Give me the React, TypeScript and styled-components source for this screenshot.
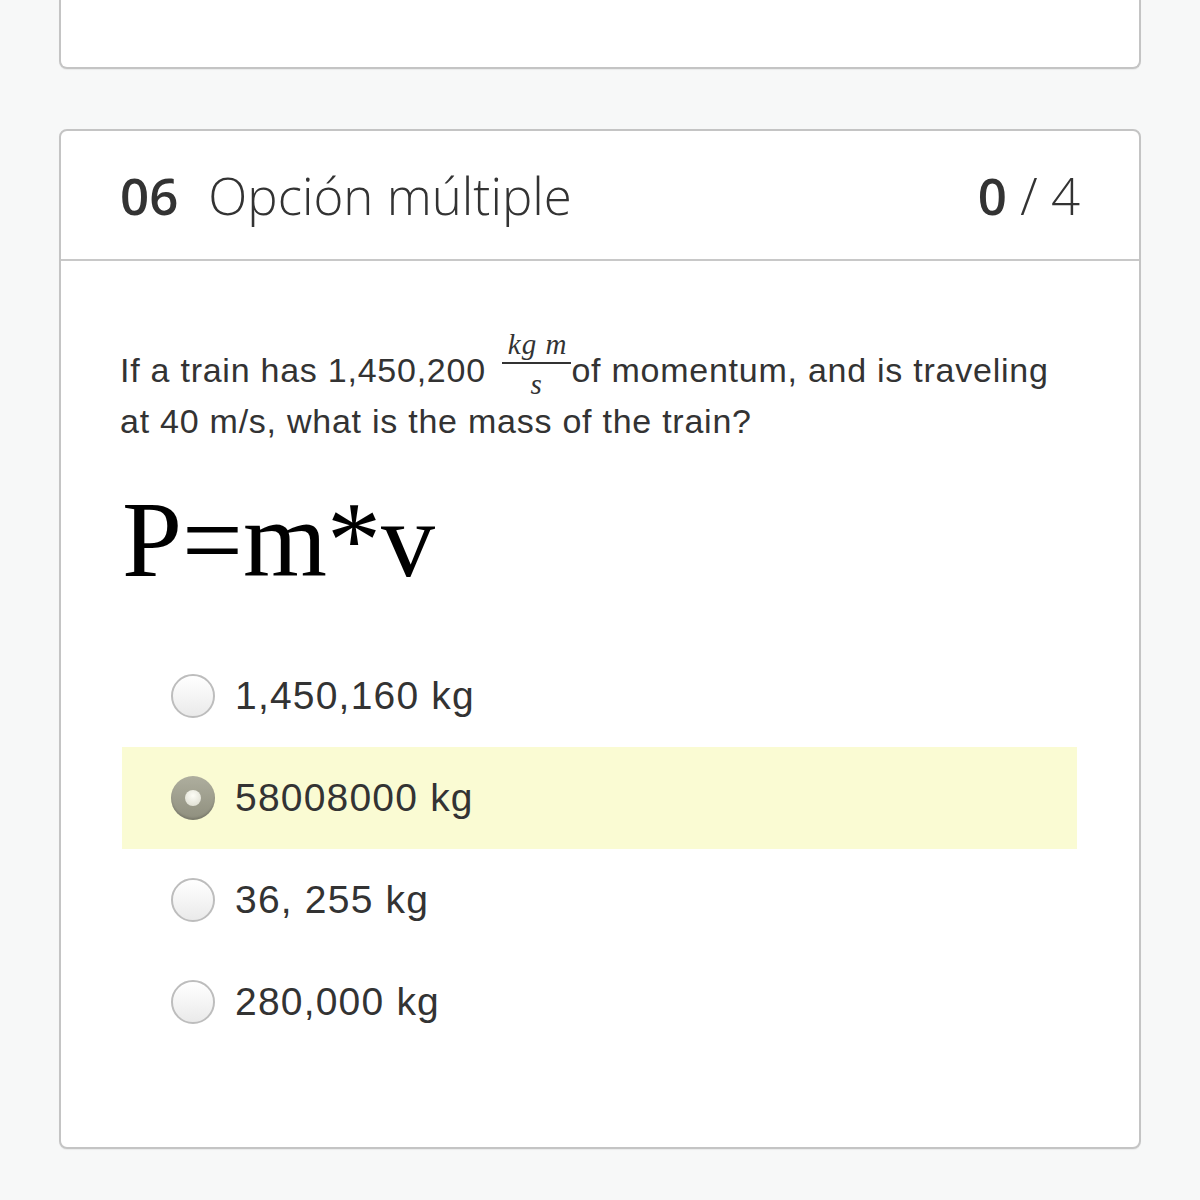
import React, { useState } from "react";
import styled, { createGlobalStyle } from "styled-components";

const GlobalStyle = createGlobalStyle`
  html, body {
    margin: 0;
    padding: 0;
    background: #f7f8f8;
  }
  body {
    font-family: "Liberation Sans", Arial, sans-serif;
    color: #333;
  }
`;

const Page = styled.div`
  padding: 0 59px 50px;
  display: flex;
  flex-direction: column;
  gap: 60px;
`;

const Card = styled.div<{ $cut?: boolean }>`
  background: #fff;
  border: 2px solid #c4c4c4;
  border-top-width: ${(p) => (p.$cut ? "0" : "2px")};
  border-radius: ${(p) => (p.$cut ? "0 0 8px 8px" : "8px")};
  box-shadow: 0 1px 1px rgba(0, 0, 0, 0.06);
  height: ${(p) => (p.$cut ? "67px" : "auto")};
`;

const Header = styled.div`
  height: 128px;
  border-bottom: 2px solid #c8c8c8;
  display: flex;
  align-items: center;
  justify-content: space-between;
  padding: 0 59px;
  font-family: "Open Sans", "Noto Sans", sans-serif;
  font-size: 51px;
  color: #333;
`;

const Title = styled.div`
  display: flex;
  align-items: baseline;
  gap: 30px;
  font-weight: 300;
`;

const Num = styled.span`
  font-weight: 600;
`;

const Score = styled.div`
  font-weight: 300;
  b {
    font-weight: 600;
  }
`;

const Body = styled.div`
  padding: 86px 59px 94px;
`;

const Question = styled.p`
  margin: 0;
  font-size: 34px;
  line-height: 46px;
  letter-spacing: 0.75px;
  color: #333;
`;

const Frac = styled.span`
  display: inline-flex;
  flex-direction: column;
  align-items: stretch;
  vertical-align: middle;
  margin: -18px 0 0 16px;
  font-family: "Liberation Serif", "DejaVu Serif", serif;
  font-style: italic;
  font-size: 29px;
  line-height: 28px;
  letter-spacing: 1px;
  text-align: center;
  span + span {
    border-top: 2px solid #333;
    padding-top: 6px;
  }
  span:first-child {
    padding: 0 4px 4px 6px;
  }
`;

const Formula = styled.div`
  font-family: "Liberation Serif", "Times New Roman", serif;
  font-size: 108px;
  line-height: 108px;
  color: #000;
  margin: 42px 0 51px 2px;
`;

const Options = styled.div`
  display: flex;
  flex-direction: column;
  margin: 0 3px 0 2px;
`;

const Option = styled.label<{ $active: boolean }>`
  height: 102px;
  display: flex;
  align-items: center;
  gap: 20px;
  padding-left: 49px;
  background: ${(p) => (p.$active ? "#fafbd3" : "transparent")};
  font-size: 39px;
  letter-spacing: 1.2px;
  color: #333;
  cursor: pointer;
`;

const Radio = styled.span<{ $checked: boolean }>`
  width: 44px;
  height: 44px;
  border-radius: 50%;
  box-sizing: border-box;
  flex: none;
  display: flex;
  align-items: center;
  justify-content: center;
  border: ${(p) => (p.$checked ? "none" : "2px solid #bdbdbd")};
  background: ${(p) =>
    p.$checked
      ? "linear-gradient(#aeae9e, #8f8f7e)"
      : "linear-gradient(#ffffff, #eaeaea)"};
  box-shadow: ${(p) =>
    p.$checked ? "inset 0 -2px 2px rgba(0,0,0,0.15)" : "inset 0 1px 1px #fff"};
  &::after {
    content: "";
    display: ${(p) => (p.$checked ? "block" : "none")};
    width: 16px;
    height: 16px;
    border-radius: 50%;
    background: radial-gradient(circle at 50% 35%, #fdfdf6, #d9d9cc);
  }
`;

const answers = ["1,450,160 kg", "58008000 kg", "36, 255 kg", "280,000 kg"];

export default function App() {
  const [picked, setPicked] = useState(1);

  return (
    <>
      <GlobalStyle />
      <Page>
        <Card $cut />
        <Card>
          <Header>
            <Title>
              <Num>06</Num>
              <span>Opción múltiple</span>
            </Title>
            <Score>
              <b>0</b> / 4
            </Score>
          </Header>
          <Body>
            <Question>
              If a train has 1,450,200
              <Frac>
                <span>kg m</span>
                <span>s</span>
              </Frac>
              of momentum, and is traveling at 40 m/s, what is the mass of the
              train?
            </Question>
            <Formula>P=m*v</Formula>
            <Options>
              {answers.map((a, i) => (
                <Option key={a} $active={picked === i} onClick={() => setPicked(i)}>
                  <Radio $checked={picked === i} />
                  {a}
                </Option>
              ))}
            </Options>
          </Body>
        </Card>
      </Page>
    </>
  );
}
